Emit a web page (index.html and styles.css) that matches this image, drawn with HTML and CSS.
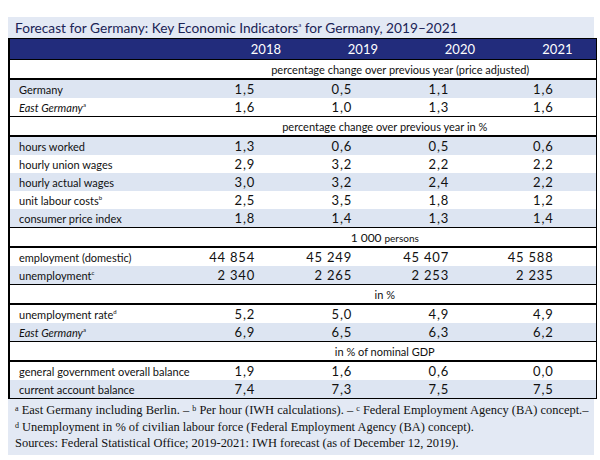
FILE: index.html
```html
<!DOCTYPE html>
<html>
<head>
<meta charset="utf-8">
<link rel="stylesheet" href="styles.css">
</head>
<body>
<div class="panel">
  <div class="title">Forecast for Germany: Key Economic Indicators<sup>a</sup> for Germany, 2019–2021</div>
  <table class="tbl">
    <colgroup>
      <col class="c-label"><col class="c-year"><col class="c-year"><col class="c-year"><col class="c-last">
    </colgroup>
    <thead>
      <tr class="head"><th></th><th>2018</th><th>2019</th><th>2020</th><th class="last">2021</th></tr>
    </thead>
    <tbody>
      <tr class="sec first"><td></td><td colspan="4">percentage change over previous year (price adjusted)</td></tr>
      <tr class="alt"><td>Germany</td><td>1,5</td><td>0,5</td><td>1,1</td><td>1,6</td></tr>
      <tr><td><i>East Germany</i><sup>a</sup></td><td>1,6</td><td>1,0</td><td>1,3</td><td>1,6</td></tr>
      <tr class="sec"><td></td><td colspan="4">percentage change over previous year in %</td></tr>
      <tr class="alt"><td>hours worked</td><td>1,3</td><td>0,6</td><td>0,5</td><td>0,6</td></tr>
      <tr><td>hourly union wages</td><td>2,9</td><td>3,2</td><td>2,2</td><td>2,2</td></tr>
      <tr class="alt"><td>hourly actual wages</td><td>3,0</td><td>3,2</td><td>2,4</td><td>2,2</td></tr>
      <tr><td>unit labour costs<sup>b</sup></td><td>2,5</td><td>3,5</td><td>1,8</td><td>1,2</td></tr>
      <tr class="alt"><td>consumer price index</td><td>1,8</td><td>1,4</td><td>1,3</td><td>1,4</td></tr>
      <tr class="sec"><td></td><td colspan="4"><span class="num">1 000</span> <span class="small">persons</span></td></tr>
      <tr><td>employment (domestic)</td><td>44 854</td><td>45 249</td><td>45 407</td><td>45 588</td></tr>
      <tr class="alt"><td>unemployment<sup>c</sup></td><td>2 340</td><td>2 265</td><td>2 253</td><td>2 235</td></tr>
      <tr class="sec"><td></td><td colspan="4">in %</td></tr>
      <tr><td>unemployment rate<sup>d</sup></td><td>5,2</td><td>5,0</td><td>4,9</td><td>4,9</td></tr>
      <tr class="alt"><td><i>East Germany</i><sup>a</sup></td><td>6,9</td><td>6,5</td><td>6,3</td><td>6,2</td></tr>
      <tr class="sec"><td></td><td colspan="4">in % of nominal GDP</td></tr>
      <tr><td>general government overall balance</td><td>1,9</td><td>1,6</td><td>0,6</td><td>0,0</td></tr>
      <tr class="alt"><td>current account balance</td><td>7,4</td><td>7,3</td><td>7,5</td><td>7,5</td></tr>
    </tbody>
  </table>
  <div class="notes">
    <div><sup>a</sup> East Germany including Berlin. – <sup>b</sup> Per hour (IWH calculations). – <sup>c</sup> Federal Employment Agency (BA) concept.–</div>
    <div><sup>d</sup> Unemployment in % of civilian labour force (Federal Employment Agency (BA) concept).</div>
    <div>Sources: Federal Statistical Office; 2019-2021: IWH forecast (as of December 12, 2019).</div>
  </div>
</div>
</body>
</html>
```
FILE: styles.css
```css
html, body {
  margin: 0;
  padding: 0;
  background: #ffffff;
}
.panel {
  margin: 17px 0 0 8px;
  width: 586px;
  background: #e3e9f4;
}
.title {
  height: 21px;
  line-height: 22px;
  padding-left: 7px;
  font-family: "Lato", sans-serif;
  font-size: 13.7px;
  color: #1b2456;
  white-space: nowrap;
}
.title sup {
  font-size: 6px;
  vertical-align: 6px;
  line-height: 0;
}
.tbl {
  width: 587px;
  table-layout: fixed;
  border-collapse: collapse;
  font-family: "Lato", sans-serif;
  font-size: 11px;
  color: #111111;
  background: #ffffff;
  border: 1px solid #000;
  border-left-width: 2px;
}
.c-label { width: 188px; }
.c-year { width: 97px; }
.c-last { width: 108px; }
.tbl th, .tbl td {
  padding: 0;
  white-space: nowrap;
}
.head th {
  background: #222c7c;
  color: #ffffff;
  font-weight: normal;
  font-size: 13px;
  height: 20px;
  text-align: right;
  padding-right: 13px;
}
.head th.last { padding-right: 23px; }
.tbl tbody td {
  height: 18px;
  text-align: right;
  padding-right: 39px;
  font-size: 13px;
  letter-spacing: 0.8px;
}
.tbl tbody td:first-child {
  text-align: left;
  padding-left: 9px;
  padding-right: 0;
  font-size: 11px;
  letter-spacing: 0;
}
.tbl tbody td:last-child { padding-right: 42px; }
.tbl tr.alt td { background: #dde5f2; }
.tbl tr.sec td {
  border-top: 1px solid #000;
  border-bottom: 2px solid #000;
  text-align: center;
  padding: 0;
  font-size: 11px;
  letter-spacing: 0;
}
.tbl tr.sec td:last-child { padding: 0 23px 0 0; }
.tbl tr.sec.first td:last-child { padding: 0 0 0 8px; }
.num { font-size: 12px; }
.small { font-size: 10px; }
.tbl sup {
  font-size: 6px;
  vertical-align: 5px;
  line-height: 0;
}
.notes {
  padding: 3px 0 3px 7px;
  font-family: "Liberation Serif", serif;
  font-size: 12.45px;
  line-height: 16.5px;
  color: #111111;
  white-space: nowrap;
}
.notes sup {
  font-size: 8px;
  vertical-align: 3px;
  line-height: 0;
}
```
